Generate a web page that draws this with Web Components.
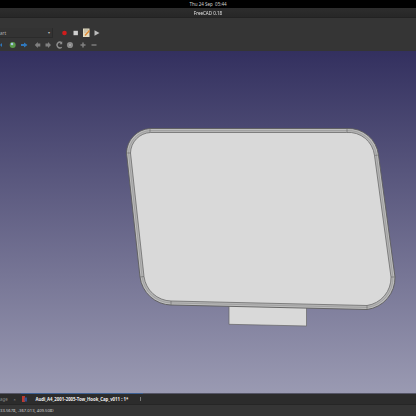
<!DOCTYPE html>
<html><head><meta charset="utf-8"><style>
html,body{margin:0;padding:0;background:#333}
</style></head><body>
<template id="t-app"><style>
:host{display:flex;flex-direction:column;width:416px;height:416px;overflow:hidden;font-family:"Noto Sans","Liberation Sans",sans-serif;color:#ddd}
</style><slot></slot></template>
<template id="t-top"><style>
:host{display:flex;align-items:center;justify-content:center;height:8px;flex:none;background:#000;color:#d0d0d0;font-size:4.5px;line-height:8px;white-space:pre}
</style><slot></slot></template>
<template id="t-title"><style>
:host{display:flex;align-items:center;justify-content:center;height:10px;flex:none;box-sizing:border-box;background:linear-gradient(#2d2d2d,#272727);color:#e4e4e4;font-size:4.5px;border-bottom:1px solid #222}
span{will-change:opacity}
</style><span><slot></slot></span></template>
<template id="t-tools"><style>
:host{display:flex;flex-direction:column;height:33px;flex:none;background:#353535;box-sizing:border-box;padding-top:9px}
.r{display:flex;align-items:center;height:12px}
.combo{width:53px;height:10px;box-sizing:border-box;border-bottom:1px solid #2b2b2b;border-right:1px solid #2b2b2b;background:#333;color:#b0b0b0;font-size:4.5px;line-height:10px;display:flex;justify-content:space-between;padding-right:2px}
.combo i{font-style:normal;font-size:4px;color:#bbb}
svg{display:block;flex:none}
</style><div class="r"><div class="combo"><span>art</span><i>▾</i></div>
<svg width="60" height="12" viewBox="0 0 60 12" style="margin-left:7px">
<circle cx="4.500" cy="6" r="2.300" fill="#d01c1c"/>
<rect x="13.500" y="3.800" width="4.400" height="4.400" fill="#cfcfcf"/>
<rect x="23" y="1.500" width="6.500" height="8.500" fill="#e4dcc2"/><path d="M24 3h4.500M24 5h2.500" stroke="#998" stroke-width=".7"/><path d="M25 8.500l4.500-5" stroke="#e08a35" stroke-width="1.400"/>
<path d="M34.500 3.200l5 2.800-5 2.800z" fill="#bcbcbc"/>
</svg></div>
<div class="r"><svg width="100" height="12" viewBox="0 0 100 12">
<path d="M0 6l2-2v4z" fill="#2f78bd"/>
<circle cx="12.700" cy="6" r="3" fill="#5a9a4a"/><circle cx="12" cy="5" r="1.300" fill="#a9c6e6"/>
<path d="M21 6l0-1h3V3.500L27.500 6 24 8.500V7h-3z" fill="#2f78bd"/>
<path d="M34.800 6l3-3v1.500h2.500v3h-2.500V9z" fill="#808080"/>
<path d="M51 6l-3-3v1.500h-2.500v3H48V9z" fill="#808080"/>
<path d="M61.700 3.700A2.900 2.900 0 1 0 61.700 8.300" fill="none" stroke="#8f8f8f" stroke-width="1.300"/><path d="M62.200 2.300v3h-2.800z" fill="#8f8f8f"/>
<circle cx="70" cy="6" r="3.100" fill="#868686"/><path d="M68.700 4.700l2.600 2.600m0-2.600l-2.600 2.600" stroke="#aaa" stroke-width=".8"/>
<path d="M80.500 6h5M83 3.500v5" stroke="#808080" stroke-width="1.500"/>
<path d="M91.500 6h5" stroke="#808080" stroke-width="1.400"/>
</svg></div></template>
<template id="t-view"><style>
:host{display:block;height:342px;flex:none;background:linear-gradient(#33305f,#9a9ab2)}
svg{display:block}
</style><svg width="416" height="342" viewBox="0 51 416 342">
<path d="M229 305L306.500 305 306.500 326 229 324.300z" fill="#d9d9d9" stroke="#666" stroke-width=".7"/>
<path d="M150 128.500H347A30 30 0 0 1 378.500 155L395 277A32 32 0 0 1 367 309.500L171 305A32 32 0 0 1 140 277L126.500 153A25 25 0 0 1 150 128.500Z" fill="#bdbdbd" stroke="#5c5c5c" stroke-width=".9"/>
<path d="M150.300 130.500H346.800A28 28 0 0 1 376.500 155.300L393 277A30 30 0 0 1 367 307.500L171 303A30 30 0 0 1 142 276.800L128.500 153A23 23 0 0 1 150.300 130.500Z" fill="#b4b4b4" stroke="#8a8a8a" stroke-width=".5"/>
<path d="M150.500 132.500H346.500A26 26 0 0 1 374.500 155.500L391 277A28 28 0 0 1 367 305.500L171 301A28 28 0 0 1 144 276.500L130.500 153A21 21 0 0 1 150.500 132.500Z" fill="#d9d9d9" stroke="#6b6b6b" stroke-width=".8"/>
<path d="M150 128.500v4M347 128.500v4M126.500 153l4 0M378.500 155l-4 .5M395 277l-4 0M140 277l4-.5M171 301v4M367 305.500v4" stroke="#666" stroke-width=".6"/>
</svg></template>
<template id="t-tabs"><style>
:host{display:flex;align-items:center;height:11px;flex:none;box-sizing:border-box;background:#2c2c2c;border-top:1px solid #555566;font-size:4.4px;color:#8a8a8a}
.tab{display:flex;align-items:center;height:11px;margin-top:-1px;border-top:1px solid #3d5f92;box-sizing:border-box;width:122px;padding-left:1px}
.a{color:#efefef;font-weight:700;margin-left:9px;white-space:nowrap;font-size:4.33px}
.x{color:#999;font-size:4px;margin-left:5px;width:7px;flex:none}
.p{width:8.500px;flex:none}
.m{width:1.500px;height:4px;background:#777;margin-left:-3px;flex:none}
svg{display:block;flex:none}
</style><span class="p">age</span><span class="x">×</span><div class="tab"><svg width="5" height="6" viewBox="0 0 5 6"><rect width="3" height="6" fill="#bb3a30"/><rect x="2.500" y="1.500" width="2.500" height="4" fill="#33508f"/></svg><span class="a">Audi_A4_2001-2005-Tow_Hook_Cap_v011 : 1*</span></div><i class="m"></i></template>
<template id="t-status"><style>
:host{display:flex;align-items:center;height:12px;flex:none;background:#353535;font-size:4.2px;color:#d0d0d0;white-space:nowrap;overflow:hidden;border-top:1px solid #262626;box-sizing:border-box}
</style><slot></slot></template>
<fc-app>
<fc-top>Thu 24 Sep  05:44</fc-top>
<fc-title>FreeCAD 0.18</fc-title>
<fc-tools></fc-tools>
<fc-view></fc-view>
<fc-tabs></fc-tabs>
<fc-status>33.5678, -367.013, 409.508)</fc-status>
</fc-app>
<script>
for (const [tag,id] of [['fc-app','t-app'],['fc-top','t-top'],['fc-title','t-title'],['fc-tools','t-tools'],['fc-view','t-view'],['fc-tabs','t-tabs'],['fc-status','t-status']]) {
  customElements.define(tag, class extends HTMLElement {
    constructor(){super();this.attachShadow({mode:'open'}).appendChild(document.getElementById(id).content.cloneNode(true));}
  });
}
</script>
</body></html>
